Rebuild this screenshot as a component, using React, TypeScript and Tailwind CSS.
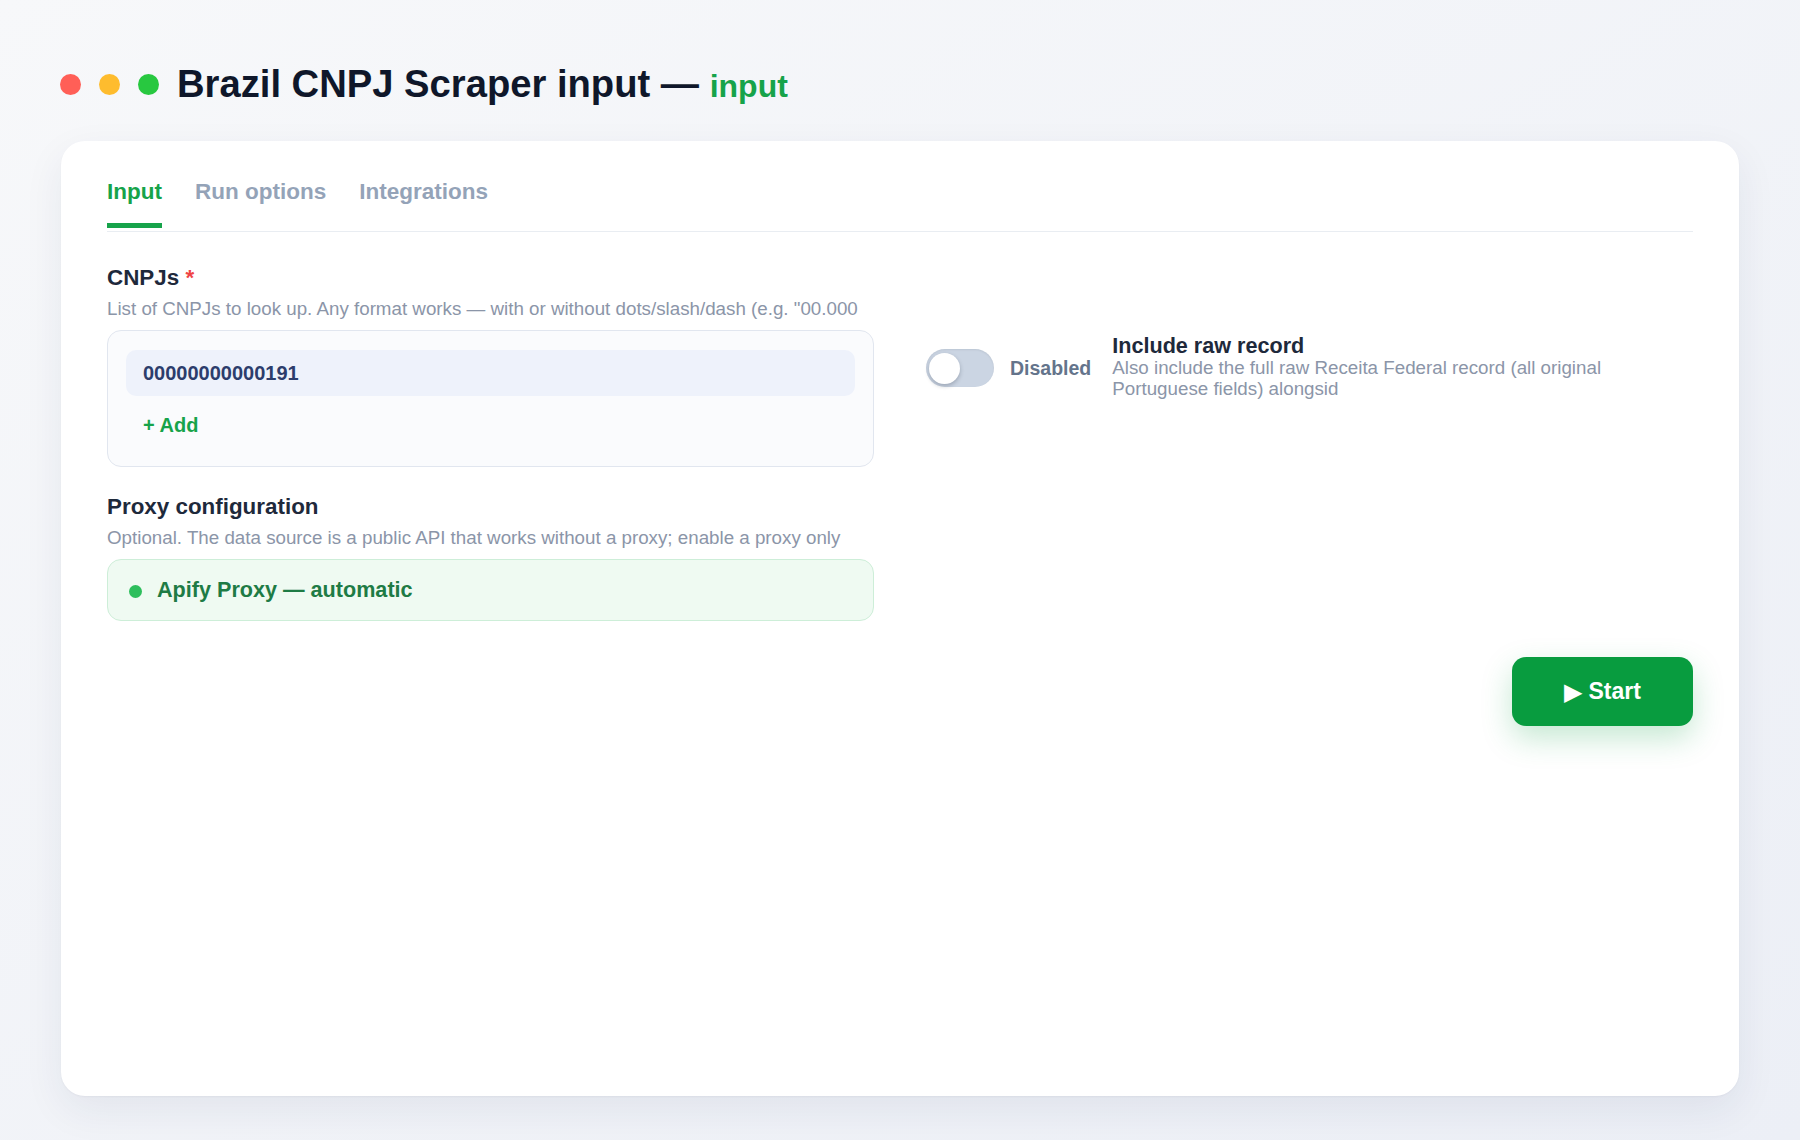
import React from "react";

export default function App() {
  return (
    <div className="w-[1800px] h-[1140px] flex flex-col px-[61px] pt-[63px] pb-[44px] bg-gradient-to-br from-[#f7f8fa] to-[#eceff6] font-['Liberation_Sans',Arial,sans-serif]">
      {/* Header */}
      <div className="-ml-[1px] flex items-center gap-[18px] h-[39px]">
        <div className="flex items-center gap-[18px] mt-[3px]">
          <span className="w-[21px] h-[21px] rounded-full bg-[#ff5f57]" />
          <span className="w-[21px] h-[21px] rounded-full bg-[#febc2e]" />
          <span className="w-[21px] h-[21px] rounded-full bg-[#28c840]" />
        </div>
        <h1 className="mt-[4px] text-[38.2px] leading-[39px] font-bold text-[#0f172a] whitespace-nowrap">
          Brazil CNPJ Scraper input — <span className="text-[32px] text-[#16a34a]">input</span>
        </h1>
      </div>

      {/* Card */}
      <div className="mt-[39px] flex-1 bg-white rounded-[24px] px-[46px] pt-[38px] shadow-[0_1px_2px_rgba(15,23,42,0.04),0_14px_40px_rgba(30,41,80,0.07)]">
        {/* Tabs */}
        <div className="flex gap-[33px] border-b border-[#e9edf2] pb-[3px]">
          <button className="flex flex-col items-stretch">
            <span className="text-[22.5px] leading-[26px] font-bold text-[#16a34a]">Input</span>
            <span className="mt-[18px] h-[5px] bg-[#16a34a]" />
          </button>
          <button className="flex flex-col items-stretch">
            <span className="text-[22.5px] leading-[26px] font-bold text-[#94a3b8]">Run options</span>
            <span className="mt-[18px] h-[5px] bg-transparent" />
          </button>
          <button className="flex flex-col items-stretch">
            <span className="text-[22.5px] leading-[26px] font-bold text-[#94a3b8]">Integrations</span>
            <span className="mt-[18px] h-[5px] bg-transparent" />
          </button>
        </div>

        {/* Fields grid */}
        <div className="mt-[33px] grid grid-cols-2 gap-x-[52px] gap-y-[27px]">
          {/* CNPJs */}
          <div className="flex flex-col">
            <div className="text-[22.4px] leading-[25px] font-bold text-[#1e293b]">
              CNPJs <span className="text-[#ef4444]">*</span>
            </div>
            <div className="mt-[8px] text-[18.75px] leading-[21px] text-[#8b95a8] whitespace-nowrap overflow-hidden">
              List of CNPJs to look up. Any format works — with or without dots/slash/dash (e.g. "00.000
            </div>
            <div className="mt-[11px] border border-[#e1e6ef] bg-[#fafbfd] rounded-[14px] pt-[19px] px-[18px] pb-[21px]">
              <div className="h-[46px] flex items-center px-[17px] rounded-[10px] bg-[#eef2fb] text-[20px] font-bold text-[#2c3d6c]">
                00000000000191
              </div>
              <button className="mt-[9px] h-[40px] flex items-center px-[17px] text-[20px] font-bold text-[#16a34a]">
                + Add
              </button>
            </div>
          </div>

          {/* Include raw record */}
          <div className="self-center mt-[2px] flex items-start">
            <div className="mt-[15px] w-[68px] h-[38px] shrink-0 rounded-full bg-[#cbd5e3] flex items-center pl-[3px] shadow-[inset_0_1px_2px_rgba(15,23,42,0.08)]">
              <span className="w-[31px] h-[31px] rounded-full bg-white shadow-[0_2px_4px_rgba(15,23,42,0.25)]" />
            </div>
            <div className="ml-[16px] mt-[23px] text-[19.5px] leading-[22px] font-bold text-[#64748b] whitespace-nowrap">
              Disabled
            </div>
            <div className="ml-[21px] flex-1 flex flex-col">
              <div className="text-[21.6px] leading-[24px] font-bold text-[#1e293b]">Include raw record</div>
              <div className="text-[18.75px] leading-[20.7px] text-[#8b95a8]">
                Also include the full raw Receita Federal record (all original Portuguese fields) alongsid
              </div>
            </div>
          </div>

          {/* Proxy configuration */}
          <div className="flex flex-col">
            <div className="text-[22.4px] leading-[25px] font-bold text-[#1e293b]">Proxy configuration</div>
            <div className="mt-[8px] text-[18.75px] leading-[21px] text-[#8b95a8] whitespace-nowrap overflow-hidden">
              Optional. The data source is a public API that works without a proxy; enable a proxy only
            </div>
            <div className="mt-[11px] h-[62px] border border-[#cdeed8] bg-[#effaf2] rounded-[14px] flex items-center px-[21px] gap-[15px]">
              <span className="w-[13px] h-[13px] rounded-full bg-[#2dbe5c] mt-[2px]" />
              <span className="text-[21.6px] font-bold text-[#1e7b45]">Apify Proxy — automatic</span>
            </div>
          </div>
          <div />
        </div>

        {/* Start */}
        <div className="mt-[36px] flex justify-end">
          <button className="w-[181px] h-[69px] rounded-[14px] bg-[#089c3f] text-white text-[23px] font-bold flex items-center justify-center gap-[6px] shadow-[0_12px_30px_rgba(22,163,74,0.25)]">
            <span className="font-['DejaVu_Sans',sans-serif] text-[24px] leading-none">▶</span>
            <span>Start</span>
          </button>
        </div>
      </div>
    </div>
  );
}
